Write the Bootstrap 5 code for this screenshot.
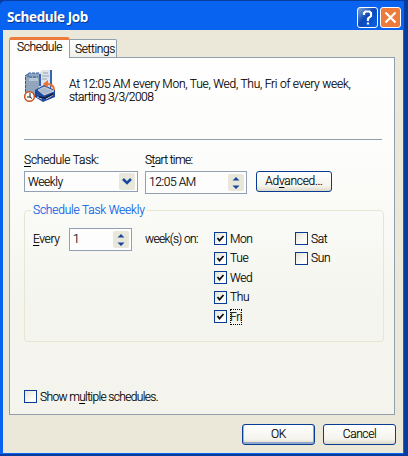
<!DOCTYPE html>
<html lang="en">
<head>
<meta charset="utf-8">
<title>Schedule Job</title>
<meta name="viewport" content="width=device-width, initial-scale=1">
<link href="https://cdn.jsdelivr.net/npm/bootstrap@5.3.0/dist/css/bootstrap.min.css" rel="stylesheet">
<style>
body{width:408px;height:456px;overflow:hidden;background:#083a9c;font:300 12px/14px Roboto,"Liberation Sans",sans-serif;color:#000;letter-spacing:-.4px;white-space:nowrap;-webkit-text-stroke:.15px}
.dialog{width:408px;height:456px;background:#0864f0;border-radius:5px 5px 0 0;border-right:4px solid #083c9e;border-top:1px solid #083c9e;border-bottom:2px solid #083c9e;padding:0 1px 1px 3px}
.titlebar{height:29px;padding:0 2px 0 4px}
.caption{font:bold 13.5px/18px "Open Sans","Noto Sans",sans-serif;color:#fff;text-shadow:1px 1px #083890;letter-spacing:-.4px;padding-top:2px;-webkit-text-stroke:0}
.cap-btn{width:21px;height:21px;border:1px solid #fff;border-radius:3px;margin-top:3px}
.cap-help{background:linear-gradient(135deg,#83a6d4,#0d48b8 45%,#0864e8);margin-right:2px}
.cap-close{background:#ec7b3c}
.client{height:423px;background:#ebe8d9;padding:7px 8px 0 6px}
.tabs{height:20px}
.tab-on{width:61px;height:21px;border:1px solid #91a0ae;border-top:3px solid #ec7b3c;border-bottom:0;border-radius:3px 3px 0 0;background:#fdfdfc;padding:0 0 0 7px;position:relative;z-index:1}
.tab-off{width:47px;height:18px;border:1px solid #91a0ae;border-left:0;border-bottom:0;background:linear-gradient(#fefefe,#f0f0ea);padding:2px 0 0 5px;border-radius:0 2px 0 0}
.pane{width:386px;height:358px;border:1px solid #91a0ae;background:linear-gradient(#fefefe,#fdfdfc 25%,#f5f5ef 68%,#f4f4ed);padding:12px 11px 0 14px}
.summary{height:69px;line-height:13px}
.sum-text{width:314px}
.rule{height:1px;background:#8f9ead;width:358px}
.labels{padding-top:13px;height:31px}
.lab1{width:121px}
.controls{height:21px}
.field-box{border:1px solid #91a0b4;background:#fdfdfd;padding:0 2px 0 3px}
.combo{width:114px;height:21px;margin-right:7px}
.time{width:102px;height:23px;margin-right:9px}
.time>:first-child,.weeks>:first-child{margin-top:-2px}
.weeks{width:63px;height:23px}
.drop{width:16px;height:17px;background:#e9e7da;border-radius:2px}
.xp-btn{height:21px;border:1px solid #083c94;border-radius:3px;background:linear-gradient(#fff,#f4f3ec 75%,#dcd8c8);font-weight:inherit;line-height:19px;text-align:center;padding:0;color:#000;letter-spacing:inherit}
.adv{width:76px;letter-spacing:-.3px}
.ok-btn,.cancel-btn{width:73px}
.ok-btn{box-shadow:inset 0 -2px #91a6c8,inset 1px 0 #a4b5d0,inset -1px 0 #91a6c8}
.group{width:360px;height:132px;border:1px solid #e8e5d3;border-radius:4px;margin-top:18px;padding:0 0 0 8px}
.legend-text{color:#0860e8;background:#fafaf7;width:116px;margin:-8px 0 0 -2px;padding-left:2px;height:14px;letter-spacing:-.22px}
.group-row{padding-top:11px}
.every{width:36px;padding-top:4px}
.on{width:82px;padding:4px 0 0 13px}
.days{width:81px;padding-top:4px}
.box{width:13px;height:13px;border:1px solid #083c94;background:linear-gradient(135deg,#e4e2d5,#fff 75%);flex:none}
.box svg,.drop svg{display:block}
.day{height:13px;gap:3px}
.day+.day{margin-top:6.5px}
.focus-text{outline:1px dotted #000;outline-offset:-1px;padding:1px 0}
.multi{margin-top:48px}
.btn-row{padding-top:9px;gap:8px;margin-right:-1px}
u{text-underline-offset:2px;text-decoration-thickness:1px}
.ls-a{letter-spacing:-.25px}
.ls-b{letter-spacing:-.65px}
</style>
</head>
<body>
<div class="dialog">
  <header class="titlebar d-flex align-items-center">
    <div class="caption me-auto">Schedule Job</div>
    <div class="cap-btn cap-help"><svg width="19" height="19" viewBox="0 0 19 19" class="d-block"><path d="M6 7V5l1.500-1.500h4L13 5v3l-3 2.500V13M10 14.500v2" fill="none" stroke="#fff" stroke-width="2.200"/></svg></div>
    <div class="cap-btn cap-close"><svg width="19" height="19" viewBox="0 0 19 19" class="d-block"><path d="M4.500 4.500l10 10m0-10l-10 10" stroke="#fff" stroke-width="2.200"/></svg></div>
  </header>
  <main class="client">
    <div class="tabs d-flex align-items-end">
      <div class="tab-on align-self-start">Schedule</div>
      <div class="tab-off">Settings</div>
    </div>
    <section class="pane">
      <div class="summary d-flex">
        <svg width="32" height="33" viewBox="0 0 32 33" class="flex-shrink-0">
          <path d="M1 6l4-3h11v20l-5 3-10-3z" fill="#91a5bd"/>
          <path d="M1 6l4-3h11M4 4v3h10M1.500 7v15" stroke="#315aa8" fill="none" stroke-dasharray="3 1"/>
          <path d="M5 8h9v3H5z" fill="#b8c5d4"/>
          <path d="M15 3l3-3h10v17l-3 3H15z" fill="#dfe4e8"/>
          <path d="M26 0h2v16l-2 3zM15 4h2v12h-2z" fill="#3762b5"/>
          <path d="M19 3h5M18 6h7M18 9h5" stroke="#8fa1b5"/>
          <path d="M11 20l9-5 11 5v7l-12 5-8-5z" fill="#214a9c"/>
          <path d="M14 20l6-3 10 4-10 4zM13 27l5 2M22 29l7-4" stroke="#c8d3de" fill="#a9b9cc"/>
          <path d="M15 27l6 1 8-4" stroke="#111d3a" stroke-width="1.500" fill="none"/>
          <path d="M30 20c0-4-3-6-7-6" stroke="#ec7132" stroke-width="2" fill="none"/><path d="M19 14l5-4v8z" fill="#ec7132"/>
          <circle cx="5.500" cy="26.500" r="4.800" fill="#fff" stroke="#c9521c" stroke-width="1.500"/>
          <path d="M6 23v4H3M6 27l2 1.500" stroke="#222" fill="none"/>
        </svg>
        <div class="ms-auto sum-text"><div class="pt-2 ls-a">At 12:05 AM every Mon, Tue, Wed, Thu, Fri of every week,</div><div class="ls-b" style="letter-spacing:-.5px">starting 3/3/2008</div></div>
      </div>
      <div class="rule"></div>
      <div class="d-flex labels"><div class="lab1 ls-a"><u>S</u>chedule Task:</div><div class="ls-b">S<u>t</u>art time:</div></div>
      <div class="d-flex controls align-items-start">
        <div class="field-box combo d-flex align-items-center"><span class="me-auto">Weekly</span><span class="drop"><svg width="16" height="17"><path d="M4 6l4 4 4-4" fill="none" stroke="#1747a0" stroke-width="2.500"/></svg></span></div>
        <div class="field-box time d-flex align-items-center"><span class="me-auto">12:05 AM</span><span class="drop"><svg width="16" height="17"><path d="M4.500 6.500L8 3l3.500 3.500zM4.500 11.500L8 15l3.500-3.500z" fill="#1747a0"/></svg></span></div>
        <button type="button" class="xp-btn adv">Ad<u>v</u>anced...</button>
      </div>
      <div class="group">
        <div class="legend-text">Schedule Task Weekly</div>
        <div class="d-flex align-items-start group-row">
          <div class="every"><u>E</u>very</div>
          <div class="field-box weeks d-flex align-items-center"><span class="me-auto">1</span><span class="drop"><svg width="16" height="17"><path d="M4.500 6.500L8 3l3.500 3.500zM4.500 11.500L8 15l3.500-3.500z" fill="#1747a0"/></svg></span></div>
          <div class="on ls-b">week(s) on:</div>
          <div class="days">
            <div class="day d-flex align-items-center"><span class="box"><svg width="11" height="11"><path d="M2.500 5l2 2.500L8.500 3" fill="none" stroke="#111" stroke-width="1.800"/></svg></span><span>Mon</span></div>
            <div class="day d-flex align-items-center"><span class="box"><svg width="11" height="11"><path d="M2.500 5l2 2.500L8.500 3" fill="none" stroke="#111" stroke-width="1.800"/></svg></span><span>Tue</span></div>
            <div class="day d-flex align-items-center"><span class="box"><svg width="11" height="11"><path d="M2.500 5l2 2.500L8.500 3" fill="none" stroke="#111" stroke-width="1.800"/></svg></span><span>Wed</span></div>
            <div class="day d-flex align-items-center"><span class="box"><svg width="11" height="11"><path d="M2.500 5l2 2.500L8.500 3" fill="none" stroke="#111" stroke-width="1.800"/></svg></span><span>Thu</span></div>
            <div class="day d-flex align-items-center"><span class="box"><svg width="11" height="11"><path d="M2.500 5l2 2.500L8.500 3" fill="none" stroke="#111" stroke-width="1.800"/></svg></span><span class="focus-text">Fri</span></div>
          </div>
          <div class="days">
            <div class="day d-flex align-items-center"><span class="box"></span><span>Sat</span></div>
            <div class="day d-flex align-items-center"><span class="box"></span><span>Sun</span></div>
          </div>
        </div>
      </div>
      <div class="day multi d-flex align-items-center"><span class="box"></span><span class="ls-b">Show m<u>u</u>ltiple schedules.</span></div>
    </section>
    <footer class="d-flex justify-content-end btn-row"><button type="button" class="xp-btn ok-btn">OK</button><button type="button" class="xp-btn cancel-btn">Cancel</button></footer>
  </main>
</div>
</body>
</html>
